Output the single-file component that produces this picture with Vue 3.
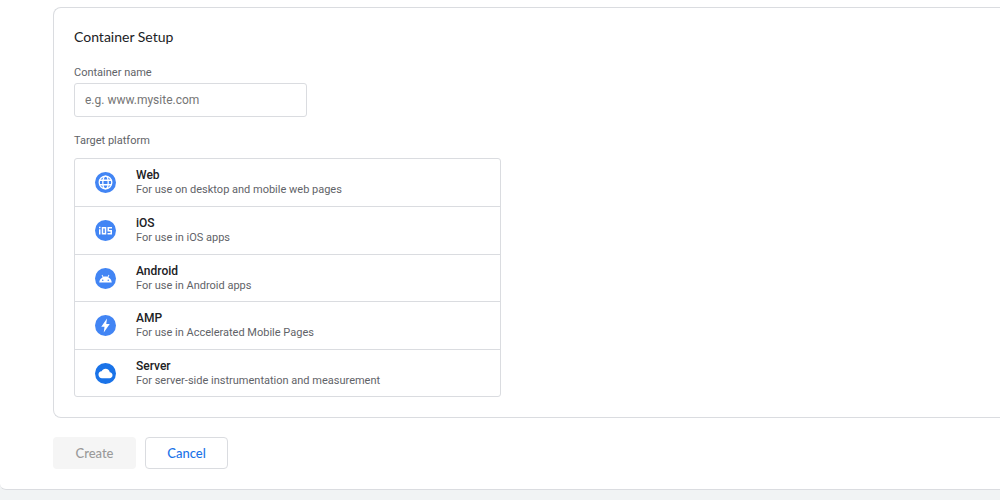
<script setup>
import { ref } from 'vue'

const containerName = ref('')
const selected = ref('')

const platforms = [
  { id: 'web', title: 'Web', text: 'For use on desktop and mobile web pages' },
  { id: 'ios', title: 'iOS', text: 'For use in iOS apps' },
  { id: 'android', title: 'Android', text: 'For use in Android apps' },
  { id: 'amp', title: 'AMP', text: 'For use in Accelerated Mobile Pages' },
  { id: 'server', title: 'Server', text: 'For server-side instrumentation and measurement' },
]
</script>

<template>
  <main class="panel">
    <form @submit.prevent>
      <section class="card">
        <h1>Container Setup</h1>
        <label class="caption" for="container-name">Container name</label>
        <input id="container-name" v-model="containerName" type="text" placeholder="e.g. www.mysite.com" />
        <h2 id="platform-label" class="caption">Target platform</h2>
        <ul class="platforms" aria-labelledby="platform-label">
          <li v-for="p in platforms" :key="p.id">
            <button type="button" class="platform" :aria-pressed="selected === p.id" @click="selected = p.id">
              <svg class="icon" viewBox="0 0 42 42" aria-hidden="true">
                <circle cx="21" cy="21" r="21" :fill="p.id === 'server' ? '#1a73e8' : '#4285f4'" />
                <g v-if="p.id === 'web'" fill="none" stroke="#fff" stroke-width="2.6">
                  <circle cx="21" cy="21" r="12.6" />
                  <ellipse cx="21" cy="21" rx="5.4" ry="12.6" />
                  <path d="M9.5 16.5h23M9.5 25.5h23" />
                </g>
                <g v-else-if="p.id === 'ios'" fill="none" stroke="#fff" stroke-width="3">
                  <path d="M9.500 18.500v10.500M9.500 13.500v3M15 15.500h6v12h-6zM34 15.500h-7.500v6h6v6h-7.500" />
                </g>
                <g v-else-if="p.id === 'android'">
                  <path d="M8.500 29c.4-5 3-8.700 6.900-10.700l-2.200-3.800 1.500-.9 2.300 4c2.500-.9 5.500-.9 8 0l2.300-4 1.500.9-2.200 3.800c3.900 2 6.500 5.700 6.900 10.700z" fill="#fff" />
                  <circle cx="15.500" cy="24.500" r="1.500" fill="#4285f4" />
                  <circle cx="26.500" cy="24.500" r="1.500" fill="#4285f4" />
                </g>
                <path v-else-if="p.id === 'amp'" d="M24 7 12.500 23.500h6.500l-1.500 11.500 12-17h-7z" fill="#fff" />
                <path v-else transform="translate(7 7) scale(1.167)" d="M19.350 10.040A7.490 7.490 0 0 0 12 4C9.110 4 6.600 5.640 5.350 8.040A5.994 5.994 0 0 0 0 14c0 3.310 2.690 6 6 6h13c2.760 0 5-2.240 5-5 0-2.640-2.050-4.780-4.650-4.960z" fill="#fff" />
              </svg>
              <span class="words">
                <span class="title">{{ p.title }}</span>
                <span class="text">{{ p.text }}</span>
              </span>
            </button>
          </li>
        </ul>
      </section>
      <div class="actions">
        <button type="submit" class="action" disabled>Create</button>
        <button type="button" class="action cancel">Cancel</button>
      </div>
    </form>
  </main>
</template>

<style>
body {
  background: #f1f3f4;
}
</style>

<style scoped>
.panel {
  box-sizing: border-box;
  padding: 7px 0 20px 53px;
  background: #fff;
  border-bottom: 1px solid #dadce0;
  border-bottom-left-radius: 6px;
  font-family: Roboto, "Liberation Sans", sans-serif;
  color: #202124;
}
.card {
  padding: 19px 20px 20px;
  border: 1px solid #dadce0;
  border-right: 0;
  border-radius: 8px 0 0 8px;
}
h1 {
  margin: 0 0 18px;
  font: 400 14px/20px Lato, sans-serif;
}
.caption {
  display: block;
  margin: 0;
  font-size: 11px;
  font-weight: 400;
  line-height: 16px;
  color: #5f6368;
}
input {
  display: block;
  box-sizing: border-box;
  width: 233px;
  height: 34px;
  margin: 2px 0 16px;
  padding: 0 10px;
  border: 1px solid #dadce0;
  border-radius: 3px;
  font: 400 12px/16px Roboto, sans-serif;
  color: #202124;
}
input::placeholder {
  color: #757575;
}
.platforms {
  box-sizing: border-box;
  display: grid;
  grid-template-rows: 47px 48px 47px 48px 47px;
  max-width: 427px;
  margin: 9px 0 0;
  padding: 0;
  border: 1px solid #dadce0;
  border-radius: 3px;
  list-style: none;
}
li + li {
  border-top: 1px solid #dadce0;
}
.platform {
  display: flex;
  align-items: center;
  gap: 20px;
  width: 100%;
  height: 100%;
  padding: 0 20px;
  border: 0;
  background: none;
  font-family: inherit;
  text-align: left;
  cursor: pointer;
}
.icon {
  flex: none;
  width: 21px;
  height: 21px;
}
.words {
  display: grid;
}
.title {
  font-size: 12px;
  font-weight: 500;
  line-height: 15px;
  color: #202124;
}
.text {
  font-size: 11px;
  line-height: 14px;
  color: #5f6368;
}
.actions {
  display: flex;
  gap: 9px;
  margin-top: 19px;
}
.action {
  width: 83px;
  height: 32px;
  padding: 0;
  border: 1px solid transparent;
  border-radius: 4px;
  background: #f5f5f5;
  font: 500 13px/18px Lato, sans-serif;
  color: #9a9a9a;
}
.cancel {
  border-color: #dadce0;
  background: #fff;
  color: #1a73e8;
  cursor: pointer;
}
</style>
